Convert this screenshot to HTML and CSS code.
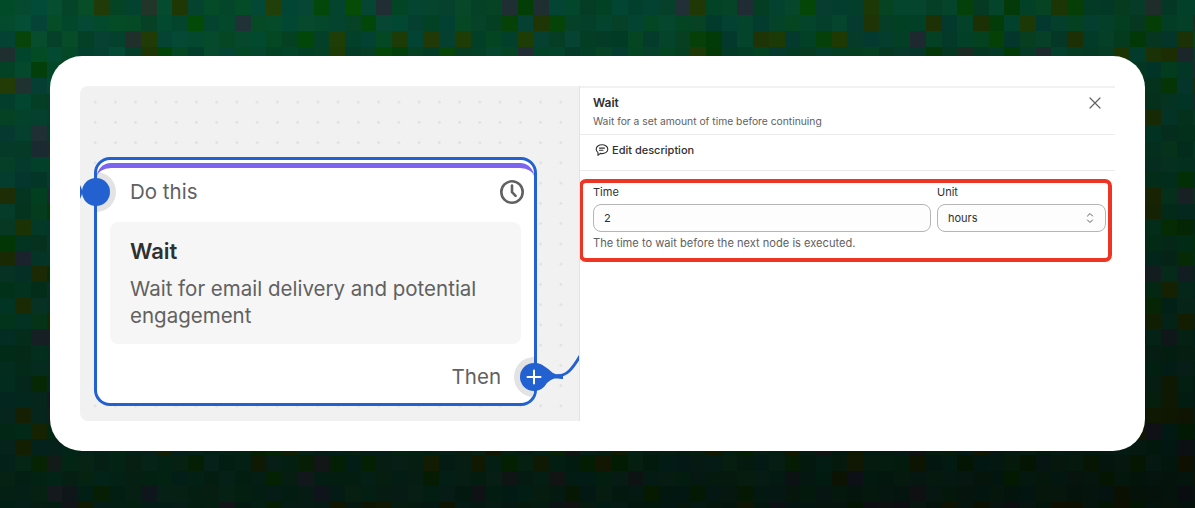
FILE: index.html
```html
<!DOCTYPE html>
<html lang="en">
<head>
    <meta charset="UTF-8">
    <meta name="viewport" content="width=device-width, initial-scale=1.0">
    <title>Wait node</title>
    <link rel="stylesheet" href="styles.css">
</head>
<body>
    <canvas class="mosaic" id="mosaic" width="1195" height="508"></canvas>

    <div class="card">
        <div class="editor">
            <div class="flow-canvas">
                <div class="node">
                    <div class="node-frame">
                        <span class="halo halo-in"></span>
                        <span class="halo halo-out"></span>
                        <div class="node-inner">
                            <div class="node-head">
                                <span>Do this</span>
                                <svg class="clock" width="26" height="26" viewBox="0 0 26 26" fill="none" stroke="#616161" stroke-width="2.6" stroke-linecap="round" stroke-linejoin="round">
                                    <circle cx="13" cy="13" r="10.7"/>
                                    <path d="M13 6.500v6.700l3.600 3.600"/>
                                </svg>
                            </div>
                            <div class="node-step">
                                <h3>Wait</h3>
                                <p>Wait for email delivery and potential engagement</p>
                            </div>
                            <div class="node-foot">Then</div>
                        </div>
                    </div>
                </div>

                <!-- edges and handles, same coordinates as the flow canvas -->
                <svg class="wires" width="500" height="335" viewBox="0 0 500 335" fill="none">
                    <path d="M0 99l3 7-3 7z" fill="#2360d0"/>
                    <circle cx="16" cy="106" r="14" fill="#2360d0"/>
                    <path d="M477 290c9 0 15 -6 23 -20" stroke="#2360d0" stroke-width="3"/>
                    <path d="M454 277c8 0 13 5 19 10 3 2 7 1 10 1v5c-3 0-7-1-10 0-7 3-11 11-19 11z" fill="#2360d0"/>
                    <circle cx="454" cy="291" r="14" fill="#2360d0"/>
                    <path d="M447.500 291h13M454 284.500v13" stroke="#fff" stroke-width="2" stroke-linecap="round"/>
                </svg>
            </div>

            <div class="panel">
                <div class="panel-head">
                    <div>
                        <h2>Wait</h2>
                        <p>Wait for a set amount of time before continuing</p>
                    </div>
                    <svg class="close" width="12" height="12" viewBox="0 0 12 12" fill="none" stroke="#616161" stroke-width="1.2" stroke-linecap="round">
                        <path d="M1 1l10 10M11 1L1 11"/>
                    </svg>
                </div>
                <div class="panel-row">
                    <svg width="14" height="14" viewBox="0 0 14 14" fill="none" stroke="#303030" stroke-width="1.1" stroke-linecap="round" stroke-linejoin="round">
                        <path d="M7 1.800c3.200 0 5.800 1.900 5.800 4.400S10.200 10.600 7 10.600c-.6 0-1.200-.1-1.700-.2L3 12.300v-2.700C2 8.800 1.200 7.600 1.200 6.200 1.200 3.700 3.800 1.800 7 1.800z"/>
                        <path d="M4.500 5.100h5M4.500 7.300h3.500"/>
                    </svg>
                    Edit description
                </div>
                <div class="highlight">
                    <div class="fields">
                        <label class="field field-time">
                            Time
                            <span class="control">2</span>
                        </label>
                        <label class="field field-unit">
                            Unit
                            <span class="control">
                                hours
                                <svg width="10" height="14" viewBox="0 0 10 14" fill="none" stroke="#5c5c5c" stroke-width="1" stroke-linecap="round" stroke-linejoin="round">
                                    <path d="M2.500 5L5 2.500 7.500 5M2.500 9L5 11.500 7.500 9"/>
                                </svg>
                            </span>
                        </label>
                    </div>
                    <p class="help">The time to wait before the next node is executed.</p>
                </div>
            </div>
        </div>
    </div>

    <script src="script.js"></script>
</body>
</html>
```

FILE: styles.css
```css
* {
    box-sizing: border-box;
}

body {
    margin: 0;
    height: 508px;
    padding: 56px 50px 57px;
    overflow: hidden;
    font-family: Inter, "Liberation Sans", sans-serif;
    background: #04281e;
    color: #303030;
}

.mosaic {
    position: fixed;
    top: 0;
    left: 0;
    z-index: -1;
}

.card {
    height: 100%;
    padding: 30px;
    background: #fff;
    border-radius: 32px;
}

.editor {
    display: flex;
    height: 335px;
}

.flow-canvas {
    position: relative;
    width: 500px;
    overflow: hidden;
    background-color: #f1f1f1;
    background-image: radial-gradient(circle, #e0e0e0 1px, transparent 1.5px);
    background-size: 20.25px 20.25px;
    background-position: 5px 6px;
    border-right: 1px solid #e3e3e3;
    border-radius: 8px 0 0 8px;
}

.wires {
    position: absolute;
    top: 0;
    left: 0;
}

.node {
    position: absolute;
    top: 71px;
    left: 14px;
    width: 443px;
    height: 249px;
}

.node-frame {
    position: relative;
    height: 100%;
    padding-top: 3px;
    overflow: hidden;
    background: #fff;
    border: 3px solid #2360d0;
    border-radius: 16px;
}

.halo {
    position: absolute;
    width: 40px;
    height: 40px;
    background: #e3e3e3;
    border-radius: 50%;
}

.halo-in {
    top: 12px;
    left: -21px;
}

.halo-out {
    bottom: 6px;
    right: -20px;
}

.node-inner {
    position: relative;
    display: flex;
    flex-direction: column;
    height: 100%;
    padding: 0 13px;
    border-top: 5px solid #7c63f0;
    border-radius: 14px 14px 0 0;
}

.node-head {
    display: flex;
    justify-content: space-between;
    align-items: center;
    height: 47px;
    padding-left: 20px;
    margin-bottom: 7px;
    font-size: 20.5px;
    line-height: 24px;
    color: #616161;
}

.clock {
    margin-right: -4px;
}

.node-step {
    height: 122px;
    padding: 15px 20px;
    background: #f6f6f6;
    border-radius: 8px;
}

.node-step h3 {
    margin: 0 0 10px;
    font-size: 22px;
    line-height: 28px;
    font-weight: 600;
    color: #303030;
}

.node-step p {
    margin: 0;
    font-size: 20.5px;
    line-height: 27px;
    color: #616161;
}

.node-foot {
    padding: 21px 20px 0 0;
    text-align: right;
    font-size: 20.5px;
    line-height: 24px;
    color: #616161;
}

.panel {
    flex: 1;
    border-top: 2px solid #f1f1f1;
}

.panel-head {
    display: flex;
    justify-content: space-between;
    height: 47px;
    padding: 7px 14px 0 13px;
    border-bottom: 1px solid #ebebeb;
}

.panel-head h2 {
    margin: 0;
    font-size: 12px;
    line-height: 16px;
    font-weight: 600;
    color: #303030;
}

.panel-head p {
    margin: 2px 0 0;
    font-size: 10.3px;
    line-height: 16px;
    color: #616161;
}

.close {
    margin-top: 2px;
}

.panel-row {
    display: flex;
    align-items: center;
    gap: 3px;
    height: 36px;
    padding: 0 0 6px 15px;
    font-size: 11px;
    font-weight: 450;
    color: #303030;
    border-bottom: 1px solid #ebebeb;
}

.highlight {
    width: 533px;
    height: 83px;
    margin: 8px 0 0 -1px;
    padding: 2px 2px 0 10px;
    border: 4px solid #ee3524;
    border-radius: 7px;
}

.fields {
    display: flex;
    gap: 6px;
}

.field {
    display: flex;
    flex-direction: column;
    gap: 5px;
    font-size: 11px;
    line-height: 14px;
    color: #303030;
}

.field-time {
    flex: 1;
}

.field-unit {
    width: 169px;
}

.control {
    display: flex;
    justify-content: space-between;
    align-items: center;
    height: 28px;
    padding: 0 10px;
    background: #fdfdfd;
    border: 1px solid #b5b5b5;
    border-radius: 8px;
}

.help {
    margin: 4px 0 0;
    font-size: 11.1px;
    line-height: 14px;
    color: #616161;
}
```

FILE: script.js
```js
// pixelated backdrop, dark green fading down and to the right
const ctx = document.getElementById('mosaic').getContext('2d');
const TILE = 15.7;

let seed = 20417;
function rand() {
    seed = (seed * 16807) % 2147483647;
    return seed / 2147483647;
}

for (let row = 0; row * TILE < 508; row++) {
    for (let col = 0; col * TILE < 1195; col++) {
        const down = row * TILE / 508;
        const across = col * TILE / 1195;
        const light = 1 - down * 0.58 - across * 0.18;
        let r = 2 + rand() * 5;
        let g = 74 * light + (rand() - 0.5) * 14 * light;
        let b = 48 * light + (rand() - 0.5) * 20 * light;
        const pick = rand();
        if (pick < 0.08) {
            // olive tile
            r += 30 * light;
            b *= 0.15;
            g *= 0.85;
        } else if (pick < 0.14) {
            // greyish tile
            r += 30 * light;
            b += 4;
            g *= 0.72;
        } else if (pick < 0.22) {
            // saturated green
            b *= 0.2;
        }
        ctx.fillStyle = `rgb(${r | 0}, ${g | 0}, ${b | 0})`;
        ctx.fillRect(Math.floor(col * TILE), Math.floor(row * TILE), 16, 16);
    }
}
```
